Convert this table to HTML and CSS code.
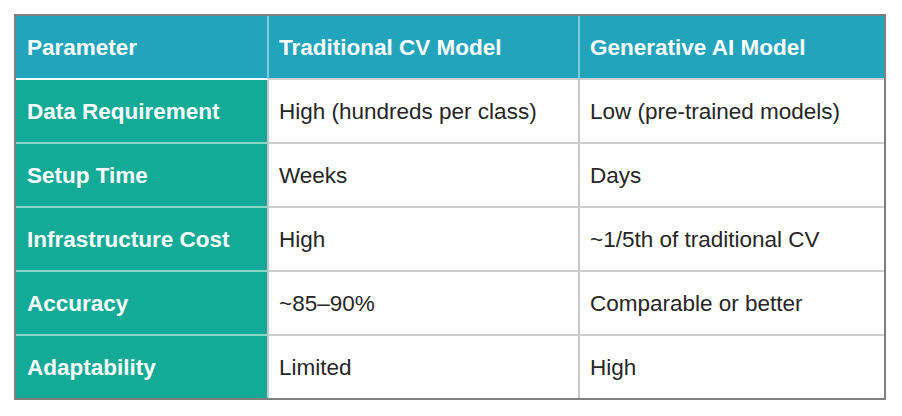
FILE: index.html
```html
<!DOCTYPE html>
<html>
<head>
<meta charset="utf-8">
<link rel="stylesheet" href="styles.css">
</head>
<body>
<table class="cmp">
  <colgroup>
    <col class="c1"><col class="c2"><col class="c3">
  </colgroup>
  <thead>
    <tr>
      <th class="h h1">Parameter</th>
      <th class="h">Traditional CV Model</th>
      <th class="h last">Generative AI Model</th>
    </tr>
  </thead>
  <tbody>
    <tr>
      <th class="rh">Data Requirement</th>
      <td>High (hundreds per class)</td>
      <td class="last">Low (pre-trained models)</td>
    </tr>
    <tr>
      <th class="rh">Setup Time</th>
      <td>Weeks</td>
      <td class="last">Days</td>
    </tr>
    <tr>
      <th class="rh">Infrastructure Cost</th>
      <td>High</td>
      <td class="last">~1/5th of traditional CV</td>
    </tr>
    <tr>
      <th class="rh">Accuracy</th>
      <td>~85–90%</td>
      <td class="last">Comparable or better</td>
    </tr>
    <tr class="end">
      <th class="rh">Adaptability</th>
      <td>Limited</td>
      <td class="last">High</td>
    </tr>
  </tbody>
</table>
</body>
</html>
```

FILE: styles.css
```css
html, body {
  margin: 0;
  padding: 0;
  background: #ffffff;
}

body {
  padding: 14px;
  font-family: "Liberation Sans", Arial, sans-serif;
}

.cmp {
  border-collapse: separate;
  border-spacing: 0;
  border: 2px solid #7f7f7f;
  table-layout: fixed;
  width: 872px;
}

.c1 { width: 253px; }
.c2 { width: 311px; }
.c3 { width: 304px; }

.cmp th, .cmp td {
  height: 60px;
  padding: 2px 0 0 10px;
  text-align: left;
  vertical-align: middle;
  font-size: 22.5px;
  line-height: 26px;
  box-sizing: content-box;
  white-space: nowrap;
}

.cmp th.h {
  background: #22a4bd;
  color: #ffffff;
  font-weight: bold;
  border-right: 2px solid #7ecbd9;
  border-bottom: 2px solid #cfcfcf;
}

.cmp th.h1 {
  padding-left: 11px;
  border-bottom: 2px solid #ffffff;
}

.cmp th.h.last {
  border-right: none;
}

.cmp th.rh {
  background: #13ab97;
  color: #ffffff;
  font-weight: bold;
  padding-left: 11px;
  border-right: 2px solid #c9c9c9;
  border-bottom: 2px solid #8fd6cc;
}

.cmp td {
  background: #ffffff;
  color: #262626;
  border-right: 2px solid #c9c9c9;
  border-bottom: 2px solid #cfcfcf;
}

.cmp td.last {
  border-right: none;
}

.cmp tr.end th, .cmp tr.end td {
  border-bottom: none;
}
```
